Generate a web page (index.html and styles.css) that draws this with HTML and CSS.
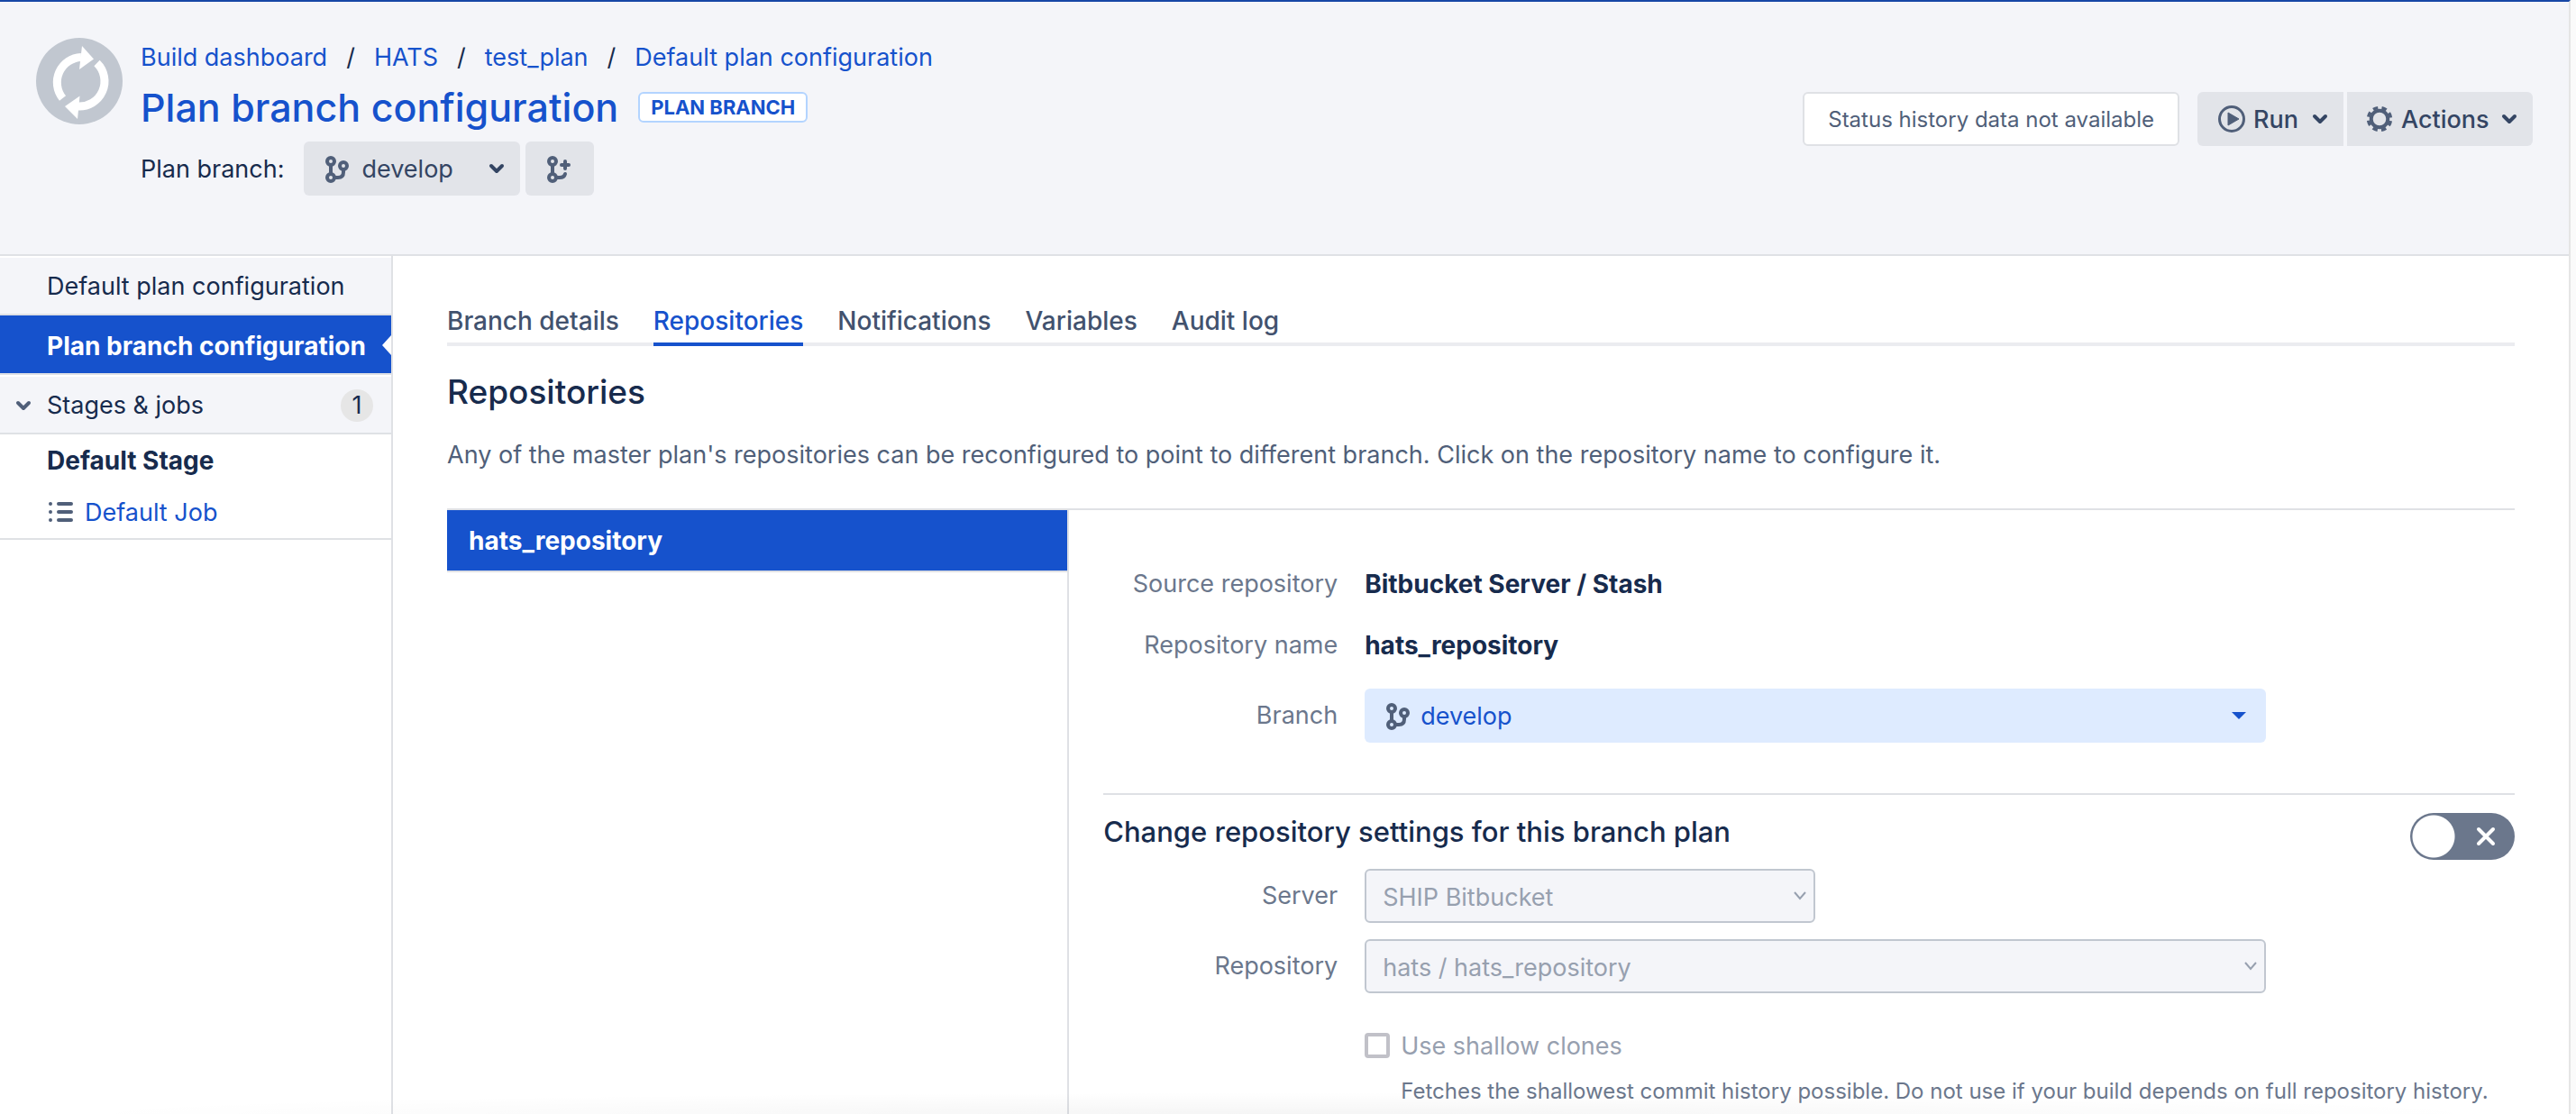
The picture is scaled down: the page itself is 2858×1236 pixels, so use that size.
FILE: index.html
```html
<!DOCTYPE html>
<html lang="en">
<head>
<meta charset="utf-8">
<title>Plan branch configuration</title>
<link rel="stylesheet" href="styles.css">
</head>
<body>
<svg class="sprite" aria-hidden="true">
  <symbol id="branch" viewBox="0 0 32 32">
    <g fill="none" stroke="currentColor" stroke-width="4">
      <circle cx="8" cy="8" r="4"/><circle cx="22" cy="13" r="4"/><circle cx="8" cy="26" r="4"/>
      <path d="M8 12v10M12 26h4q6 0 6-6v-3"/>
    </g>
  </symbol>
  <symbol id="branch-add" viewBox="0 0 32 32">
    <g fill="none" stroke="currentColor" stroke-width="4">
      <circle cx="8" cy="8" r="4"/><circle cx="8" cy="26" r="4"/>
      <path d="M8 12v10M12 26h4q5 0 6-4M22 8v8M18 12h8" stroke-linecap="round"/>
    </g>
  </symbol>
  <symbol id="chevron" viewBox="0 0 20 20">
    <path d="M4 7l6 6 6-6" fill="none" stroke="currentColor" stroke-width="4" stroke-linecap="round" stroke-linejoin="round"/>
  </symbol>
</svg>
<div class="page">
  <header class="header">
    <svg class="logo" viewBox="0 0 96 96" aria-hidden="true">
      <circle cx="48" cy="48" r="48" fill="#c1c7d0"/>
      <g fill="none" stroke="#fff" stroke-width="9">
        <path d="M29.500 67A28 28 0 0 1 50 21.500"/>
        <path d="M67.500 28A28 28 0 0 1 46 76"/>
      </g>
      <path d="M51 9L64 23.500L48 35Z" fill="#fff"/>
      <path d="M46 90L32 76L48.500 64.500Z" fill="#fff"/>
    </svg>
    <div class="header-main">
      <nav class="crumbs" aria-label="Breadcrumb">
        <a href="#">Build dashboard</a><span>/</span><a href="#">HATS</a><span>/</span><a href="#">test_plan</a><span>/</span><a href="#">Default plan configuration</a>
      </nav>
      <div class="title-row">
        <h1><a href="#">Plan branch configuration</a></h1>
        <span class="lozenge">PLAN BRANCH</span>
      </div>
      <div class="branch-row">
        <span class="branch-label">Plan branch:</span>
        <button class="btn btn-branch" type="button"><svg class="icon"><use href="#branch"/></svg><span>develop</span><svg class="chev"><use href="#chevron"/></svg></button>
        <button class="btn btn-add" type="button" aria-label="Create plan branch"><svg class="icon"><use href="#branch-add"/></svg></button>
      </div>
    </div>
    <div class="header-actions">
      <div class="status">Status history data not available</div>
      <div class="btn-group">
        <button class="btn btn-run" type="button">
          <svg class="icon" viewBox="0 0 32 32"><circle cx="16" cy="16" r="13.500" fill="none" stroke="currentColor" stroke-width="3"/><path d="M12 9v14l12-7z" fill="currentColor" stroke="currentColor" stroke-linejoin="round"/></svg><span>Run</span><svg class="chev"><use href="#chevron"/></svg></button>
        <button class="btn btn-actions" type="button">
          <svg class="icon" viewBox="0 0 32 32"><circle cx="16" cy="16" r="9.250" fill="none" stroke="currentColor" stroke-width="4"/><circle cx="16" cy="16" r="12.500" fill="none" stroke="currentColor" stroke-width="3.500" stroke-dasharray="5.500 4.317" stroke-dashoffset="-2.160"/></svg><span>Actions</span><svg class="chev"><use href="#chevron"/></svg></button>
      </div>
    </div>
  </header>
  <div class="body">
    <nav class="sidebar" aria-label="Plan">
      <a class="side-item" href="#">Default plan configuration</a>
      <a class="side-item side-current" href="#" aria-current="page">Plan branch configuration</a>
      <button class="side-item side-toggle" type="button"><svg class="chev"><use href="#chevron"/></svg><span>Stages &amp; jobs</span><span class="badge">1</span></button>
      <div class="stage">
        <h2>Default Stage</h2>
        <a class="job" href="#"><svg class="icon" viewBox="0 0 32 32"><g stroke="currentColor" stroke-width="4" stroke-linecap="round"><path d="M4 6h0M4 15h0M4 24h0M13 6h14M13 15h14M13 24h14"/></g></svg>Default Job</a>
      </div>
    </nav>
    <main class="content">
      <nav class="tabs" aria-label="Configuration">
        <a href="#">Branch details</a><a class="active" href="#">Repositories</a><a href="#">Notifications</a><a href="#">Variables</a><a href="#">Audit log</a>
      </nav>
      <h2 class="section-title">Repositories</h2>
      <p class="intro">Any of the master plan's repositories can be reconfigured to point to different branch. Click on the repository name to configure it.</p>
      <div class="split">
        <div class="repo-list"><a class="repo" href="#">hats_repository</a></div>
        <form class="detail">
          <dl class="facts">
            <dt>Source repository</dt><dd>Bitbucket Server / Stash</dd>
            <dt>Repository name</dt><dd>hats_repository</dd>
          </dl>
          <div class="field branch-field">
            <label for="branch-btn">Branch</label>
            <button class="branch-select" id="branch-btn" type="button"><svg class="icon"><use href="#branch"/></svg><span>develop</span><svg class="caret" viewBox="0 0 16 10"><path d="M0 1h16l-8 8z" fill="currentColor"/></svg></button>
          </div>
          <div class="change-head">
            <h3><label for="override">Change repository settings for this branch plan</label></h3>
            <div class="toggle">
              <input id="override" type="checkbox">
              <svg class="cross" viewBox="0 0 24 24" aria-hidden="true"><path d="M4 4l16 16M20 4L4 20" stroke="#fff" stroke-width="4" stroke-linecap="round"/></svg>
            </div>
          </div>
          <div class="field">
            <label for="server">Server</label>
            <div class="select short"><select id="server" disabled><option>SHIP Bitbucket</option></select><svg class="arrow" viewBox="0 0 14 10"><path d="M1 1l6 7 6-7" fill="none" stroke="currentColor" stroke-width="2"/></svg></div>
          </div>
          <div class="field">
            <label for="repository">Repository</label>
            <div class="select"><select id="repository" disabled><option>hats / hats_repository</option></select><svg class="arrow" viewBox="0 0 14 10"><path d="M1 1l6 7 6-7" fill="none" stroke="currentColor" stroke-width="2"/></svg></div>
          </div>
          <div class="check">
            <input id="shallow" type="checkbox" disabled>
            <label for="shallow">Use shallow clones</label>
            <p>Fetches the shallowest commit history possible. Do not use if your build depends on full repository history.</p>
          </div>
        </form>
      </div>
    </main>
  </div>
</div>
</body>
</html>
```
FILE: styles.css
```css
* { box-sizing: border-box; }
body {
  margin: 0;
  background: #fafafa;
  color: #172b4d;
  font: 27px/40px Inter, "Liberation Sans", sans-serif;
}
h1, h2, h3, p, dl, dd { margin: 0; }
a { color: #1652cc; text-decoration: none; }
button, select, input { font: inherit; margin: 0; }
.sprite { position: absolute; width: 0; height: 0; }
.icon { width: 32px; height: 32px; flex: none; color: #505f79; }
.chev { width: 20px; height: 20px; flex: none; }
.page {
  position: relative;
  min-height: 100vh;
  margin-right: 6px;
  background: #fff;
  border-right: 2px solid #e5e5e5;
  border-top: 2px solid #1747a6;
  display: flex;
  flex-direction: column;
}
/* soft shade along the bottom edge */
.page::after {
  content: "";
  position: absolute;
  left: 60px;
  right: 60px;
  bottom: 0;
  height: 24px;
  background: radial-gradient(ellipse 50% 100% at 50% 100%, rgba(0, 0, 0, 0.04), transparent);
  pointer-events: none;
}
.header {
  display: flex;
  align-items: flex-start;
  background: #f4f5f9;
  border-bottom: 2px solid #dfe1e5;
  padding: 40px 40px 65px;
}
.logo { width: 96px; height: 96px; margin-right: 20px; flex: none; }
.header-main { flex: 1; padding-top: 2px; }
.crumbs { display: flex; gap: 21px; }
.title-row { display: flex; align-items: center; gap: 22px; height: 73px; padding-bottom: 3px; }
h1 { font-size: 43px; line-height: 56px; font-weight: 500; }
.lozenge {
  background: #fff;
  border: 2px solid #b3d4ff;
  border-radius: 6px;
  color: #1652cc;
  font-size: 22px;
  line-height: 30px;
  font-weight: 700;
  padding: 0 12px;
}
.branch-row { display: flex; align-items: center; gap: 6px; }
.branch-label { margin-right: 16px; }
.btn {
  display: flex;
  align-items: center;
  height: 60px;
  border: 0;
  border-radius: 6px;
  background: #e2e4e9;
  color: #344563;
  padding: 0 16px 0 22px;
}
.btn-branch { width: 240px; gap: 10px; }
.btn-branch .chev { margin-left: auto; }
.btn-add { width: 76px; padding: 0 22px; }
.btn span, .branch-label, .branch-select span { padding-top: 2px; }
.header-actions { display: flex; gap: 20px; padding-top: 60px; }
.status {
  height: 60px;
  border: 2px solid #dfe1e5;
  border-radius: 6px;
  background: #fff;
  color: #505f79;
  font-size: 24px;
  line-height: 58px;
  padding: 0 26px;
}
.btn-group { display: flex; gap: 4px; }
.btn-group .btn { gap: 8px; font-weight: 500; }
.btn-group .chev { margin-left: auto; }
.btn-group .btn-run { width: 162px; border-radius: 6px 0 0 6px; }
.btn-group .btn-actions { width: 206px; border-radius: 0 6px 6px 0; padding-left: 20px; }
.body { display: flex; flex: 1; }
.sidebar { width: 436px; flex: none; border-right: 2px solid #dfe1e5; }
.side-item {
  display: flex;
  align-items: center;
  width: 100%;
  height: 66px;
  border: 0;
  border-top: 2px solid #fff;
  border-bottom: 2px solid #dfe1e5;
  background: #f4f5f9;
  color: #172b4d;
  padding: 2px 20px 0 52px;
}
.side-current {
  position: relative;
  border-top-color: #1652cc;
  background: #1652cc;
  color: #fff;
  font-size: 28px;
  font-weight: 700;
}
.side-current::after {
  content: "";
  position: absolute;
  right: 0;
  top: 20px;
  border: 11px solid transparent;
  border-left: 0;
  border-right: 10px solid #fff;
}
.side-toggle { padding-left: 16px; gap: 16px; }
.side-toggle .chev { color: #505f79; }
.badge {
  margin-left: auto;
  width: 36px;
  height: 36px;
  border-radius: 18px;
  background: #e6e6e6;
  line-height: 36px;
  text-align: center;
}
.stage { border-bottom: 2px solid #dfe1e5; padding: 8px 0 0 52px; }
.stage h2 { font-size: 28px; line-height: 42px; margin-bottom: 8px; }
.job { display: flex; align-items: center; gap: 10px; height: 57px; }
.content { flex: 1; padding: 50px 60px 0; display: flex; flex-direction: column; }
.tabs { display: flex; gap: 38px; border-bottom: 4px solid #ebecf0; }
.tabs a { height: 50px; margin-bottom: -4px; font-size: 28px; line-height: 44px; color: #42526e; font-weight: 500; border-bottom: 4px solid transparent; }
.tabs .active { color: #1652cc; border-bottom-color: #1652cc; }
.section-title { font-size: 37px; line-height: 48px; font-weight: 500; padding-top: 27px; }
.intro { color: #505f79; padding: 26px 0 39px; }
.split { display: flex; flex: 1; border-top: 2px solid #dfe1e5; }
.repo-list { width: calc(30% + 2px); flex: none; border-right: 2px solid #dfe1e5; }
.repo {
  display: block;
  height: 69px;
  border-bottom: 2px solid #dfe1e5;
  background: #1652cc;
  color: #fff;
  font-size: 28px;
  font-weight: 700;
  line-height: 69px;
  padding-left: 24px;
}
.detail { flex: 1; padding: 48px 0 0 38px; color: #6b778c; }
.facts { display: grid; grid-template-columns: 260px 1fr; column-gap: 30px; line-height: 68px; }
.facts dt { text-align: right; }
.facts dd { color: #172b4d; font-size: 28px; font-weight: 700; }
.field { display: flex; gap: 30px; margin-bottom: 18px; }
.field > label { width: 260px; line-height: 60px; text-align: right; flex: none; }
.branch-field { margin: 14px 0 56px; }
.branch-select {
  display: flex;
  align-items: center;
  gap: 8px;
  width: 1000px;
  height: 60px;
  border: 0;
  border-radius: 6px;
  background: #deebff;
  color: #1652cc;
  padding: 0 22px;
}
.caret { width: 16px; height: 10px; margin-left: auto; }
.change-head { display: flex; justify-content: space-between; border-top: 2px solid #dfe1e5; height: 84px; padding-top: 20px; }
h3 { color: #172b4d; font-size: 31px; line-height: 42px; font-weight: 500; }
.toggle { position: relative; width: 116px; height: 52px; }
.toggle input { appearance: none; display: block; width: 116px; height: 52px; border-radius: 26px; background: radial-gradient(circle at 26px 26px, #fff 23px, #6b778c 24px); }
.cross { position: absolute; right: 20px; top: 14px; width: 24px; height: 24px; pointer-events: none; }
.select { position: relative; width: 1000px; }
.short { width: 500px; }
.select select {
  appearance: none;
  display: block;
  width: 100%;
  height: 60px;
  border: 2px solid #c1c7d0;
  border-radius: 6px;
  background: #f4f5f9;
  color: #97a0af;
  opacity: 1;
  padding: 4px 18px 0;
}
.arrow { position: absolute; right: 10px; top: 25px; width: 14px; height: 10px; color: #97a0af; }
.check { display: grid; grid-template-columns: 28px 1fr; column-gap: 12px; align-items: center; padding: 19px 0 0 290px; }
.check input { appearance: none; width: 28px; height: 28px; border: 4px solid #c1c1c8; border-radius: 4px; background: #fff; }
.check label { color: #97a0af; padding-top: 2px; }
.check p { grid-column: 2; font-size: 24px; line-height: 32px; padding-top: 14px; }
```
